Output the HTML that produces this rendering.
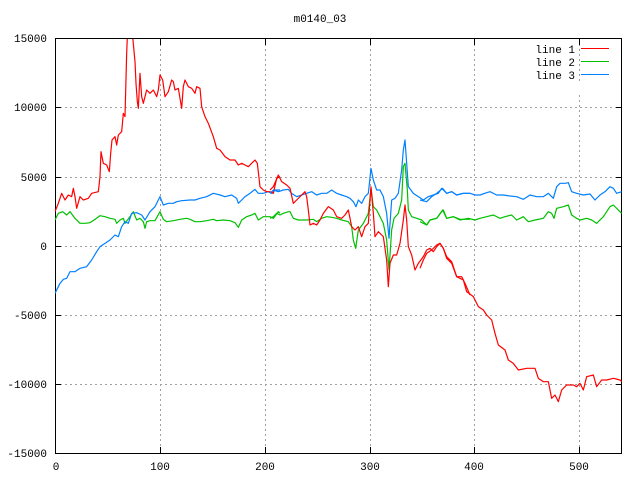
<!DOCTYPE html>
<html><head><style>
body{margin:0;background:#fff;}
svg text{font-family:"Liberation Mono",monospace;font-size:11px;fill:#000;}
</style></head><body>
<svg width="640" height="480" xmlns="http://www.w3.org/2000/svg">
<rect width="640" height="480" fill="#fff"/>
<g stroke="#a0a0a0" stroke-dasharray="2,3" stroke-width="1" fill="none" shape-rendering="crispEdges">
<path d="M160.5 39V453M265.5 39V453M370.5 39V453M474.5 39V453M579.5 39V83M579.5 95V453"/>
<path d="M55 107.5H622M55 177.5H622M55 246.5H622M55 315.5H622M55 384.5H622"/>
</g>
<g stroke="#000" stroke-width="1" fill="none" shape-rendering="crispEdges">
<rect x="55.5" y="38.5" width="566" height="415"/>
<path d="M55 107.5h6M55 177.5h6M55 246.5h6M55 315.5h6M55 384.5h6M622 107.5h-6M622 177.5h-6M622 246.5h-6M622 315.5h-6M622 384.5h-6"/>
<path d="M160.5 453v-6M265.5 453v-6M370.5 453v-6M474.5 453v-6M579.5 453v-6M160.5 39v6M265.5 39v6M370.5 39v6M474.5 39v6M579.5 39v6"/>
</g>
<text x="320" y="22" text-anchor="middle">m0140_03</text>
<g text-anchor="end">
<text x="47" y="42">15000</text><text x="47" y="111">10000</text><text x="47" y="181">5000</text>
<text x="47" y="250">0</text><text x="47" y="319">-5000</text><text x="47" y="388">-10000</text><text x="47" y="457">-15000</text>
<text x="575" y="53">line 1</text><text x="575" y="66">line 2</text><text x="575" y="79">line 3</text>
</g>
<g text-anchor="middle">
<text x="56" y="470">0</text><text x="160" y="470">100</text><text x="265" y="470">200</text><text x="370" y="470">300</text><text x="474" y="470">400</text><text x="579" y="470">500</text>
</g>
<path d="M581 48.5h28" stroke="#ff0000"/><path d="M581 61.5h28" stroke="#00c000"/><path d="M581 74.5h28" stroke="#0080ff"/>
<clipPath id="c"><rect x="55" y="39" width="567" height="414"/></clipPath>
<g clip-path="url(#c)" fill="none" stroke-width="3.6" stroke-linejoin="round">
<g transform="translate(50,30) scale(0.33333)">
<polyline stroke="#00c000" points="15,570 25,550 38,545 50,555 60,545 75,565 90,580 105,580 120,578 135,568 150,557 165,560 180,565 195,568 200,580 210,570 220,565 225,580 240,560 250,545 260,570 270,565 280,575 285,595 290,575 300,572 315,572 330,545 340,568 350,575 370,572 390,568 410,565 420,568 435,575 450,575 470,572 490,568 500,572 520,570 540,572 555,578 565,592 575,570 590,560 605,555 615,550 625,570 640,560 660,560 670,565 685,545 690,550"/>
<polyline stroke="#0080ff" points="15,790 30,760 40,748 50,745 60,725 75,725 90,715 110,710 125,690 140,665 150,650 165,640 180,630 195,615 205,620 215,590 225,575 235,580 245,550 260,548 275,555 285,570 300,545 315,530 330,500 340,525 355,520 370,520 380,515 395,512 420,510 435,510 450,505 470,500 490,490 510,495 525,500 545,495 560,505 565,520 575,510 585,500 600,490 615,478 625,490 640,490 655,485 665,490 675,480 690,480"/>
<polyline stroke="#ff0000" points="15,545 25,520 35,490 45,510 55,495 65,500 70,475 75,500 80,535 90,500 100,510 115,505 125,490 145,485 150,440 153,365 160,400 170,405 178,425 182,370 186,330 195,320 200,345 205,315 215,305 220,250 225,260 230,70 232,20 248,20 255,95 258,160 262,215 265,235 270,130 275,200 280,220 290,180 300,190 310,180 320,200 325,180 330,135 338,150 345,200 355,185 365,150 370,155 375,180 385,175 390,205 395,235 400,170 405,150 415,170 425,175 435,190 440,170 450,175 455,230 465,260 475,280 490,320 500,355 510,360 525,380 540,390 555,390 565,405 575,400 585,405 595,410 605,400 615,390 622,400 630,470 640,480 650,485 660,485 670,490 680,445 690,440"/>
</g>
<g transform="translate(270,130) scale(0.33333)">
<polyline stroke="#0080ff" points="0,190 10,180 25,185 40,180 55,178 65,190 80,200 95,195 110,190 125,185 140,195 155,190 170,190 185,180 200,190 215,195 230,200 240,205 250,215 258,230 265,210 275,220 285,200 295,190 303,115 310,150 320,180 330,180 340,200 350,250 357,325 365,210 375,205 385,190 395,120 400,60 405,30 410,100 415,170 430,190 445,200 460,210 475,200 490,195 505,190 515,175 530,190 545,185 560,195 580,190 600,190"/>
<polyline stroke="#00c000" points="0,265 10,260 20,250 30,255 40,250 55,245 60,245 70,265 85,270 110,270 130,268 140,275 155,265 170,260 185,262 200,265 215,270 235,275 245,290 250,330 257,355 265,300 280,280 295,250 303,175 310,230 320,240 330,260 340,280 350,330 357,420 365,300 372,265 385,250 395,210 400,110 405,100 412,180 415,240 425,260 440,265 455,270 470,285 480,270 500,265 515,245 520,240 530,265 550,260 570,268 600,268"/>
<polyline stroke="#ff0000" points="0,180 10,170 25,135 35,155 50,165 60,175 70,220 80,210 95,195 105,185 110,200 115,240 120,285 130,280 140,285 150,270 160,250 175,230 190,240 200,260 215,265 225,255 235,240 245,290 255,300 265,290 275,320 285,290 295,280 303,170 310,250 315,320 325,305 340,320 350,390 355,470 360,400 370,375 380,375 390,340 400,270 405,225 410,270 415,350 425,375 435,420 445,400 460,380 470,360 480,355 490,365 500,350 510,340 520,355 530,380 545,395 560,440 575,440 585,460 600,495"/>
</g>
<g transform="translate(420,160) scale(0.33333)">
<polyline stroke="#0080ff" points="0,120 20,125 35,110 50,100 68,85 80,100 95,95 110,105 130,100 150,100 165,105 180,105 200,98 210,95 230,105 250,105 270,108 290,110 310,118 330,105 350,110 370,110 385,100 400,115 410,80 420,70 435,70 445,68 455,95 470,100 490,105 510,102 525,120 540,105 555,95 570,80 580,85 590,100 605,95"/>
<polyline stroke="#00c000" points="0,185 20,195 30,180 50,175 68,150 80,175 100,170 120,180 145,175 165,180 180,175 200,170 220,165 240,175 255,170 275,165 290,180 310,170 325,185 345,180 370,175 385,155 395,160 402,175 410,145 430,140 445,135 455,165 470,175 480,180 500,175 515,180 530,190 550,170 570,140 580,135 600,155 605,160"/>
<polyline stroke="#ff0000" points="0,325 10,300 20,280 35,270 50,255 60,250 70,265 80,295 95,310 110,350 130,360 140,395 160,410 175,440 190,450 200,465 215,480 225,520 235,555 255,570 265,600 280,610 295,630 320,625 345,625 355,655 370,665 385,665 395,715 405,705 415,725 425,690 440,675 460,675 470,680 480,670 490,690 500,650 520,645 530,680 545,660 560,660 580,655 600,660 605,665"/>
</g>
</g>
</svg>
</body></html>
